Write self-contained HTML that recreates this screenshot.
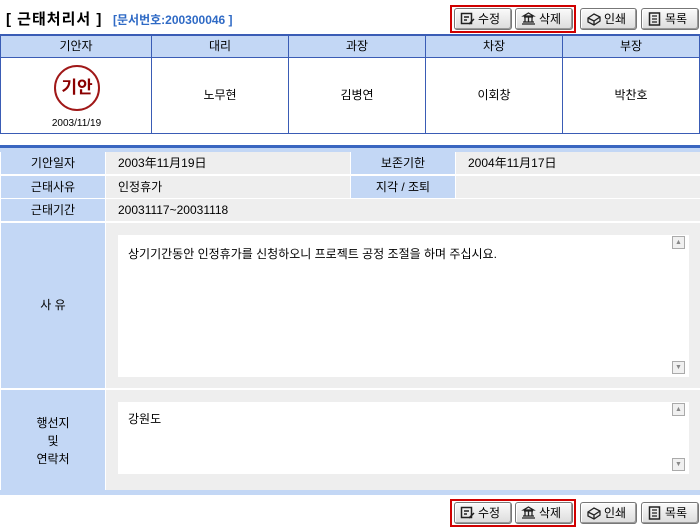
<html><head><style>
body{margin:0;width:700px;height:531px;background:#fff;font-family:"Liberation Sans","Noto Sans CJK KR","NanumGothic",sans-serif;font-size:12px;color:#000;position:relative;overflow:hidden}
div{position:absolute;box-sizing:border-box}
.lab{background:#c3d7f5;text-align:center}
.val{background:#eeeeee;padding-left:12px}
.btn{height:22px;top:8px;border:1px solid #777;border-radius:3px;background:linear-gradient(#fafafa,#dcdcdc);box-shadow:inset -1px -1px 0 #999,inset 1px 1px 0 #fff;font-size:12px;line-height:20px;padding-left:23px}
.btn svg{position:absolute;left:5px;top:3px}
.red{border:2px solid #d00000;height:28px;top:5px}
.ta{background:#fff}
.sb{width:13px;height:13px;border:1px solid #aaa;background:#f0f0f0;font-size:7px;line-height:11px;text-align:center;color:#888}
.hd{top:36px;height:21px;background:#c3d7f5;text-align:center;line-height:21px;border-right:1px solid #3a5cb5}
.bd{top:57px;height:76px;text-align:center;line-height:76px;border-right:1px solid #3a5cb5}
</style></head><body>
<div style="left:6px;top:8px;font-size:15px;font-weight:bold;letter-spacing:1px">[ 근태처리서 ]</div>
<div style="left:113px;top:11px;font-size:12px;font-weight:bold;color:#2f6ac5">[문서번호:200300046 ]</div>

<div class="red" style="left:450px;width:126px"></div>
<div class="btn" style="left:454px;width:58px"><svg width="15" height="14"><rect x="1.5" y="1.5" width="10" height="10" fill="none" stroke="#222" stroke-width="1.5"/><path d="M4 5h5M4 8h3M9 12l5-5" stroke="#222" stroke-width="1.5"/></svg>수정</div>
<div class="btn" style="left:515px;width:58px"><svg width="15" height="14"><path d="M1 12h13M2 10h11M3 5h9M7.5 1l5 3h-10z M4 5v5M7.5 5v5M11 5v5" stroke="#222" fill="none" stroke-width="1.3"/></svg>삭제</div>
<div class="btn" style="left:580px;width:57px"><svg width="15" height="14"><path d="M2 6l6-4 6 3v4l-6 4-6-3z M2 6l6 3 6-4 M8 9v4" stroke="#222" fill="none" stroke-width="1.3"/></svg>인쇄</div>
<div class="btn" style="left:641px;width:58px"><svg width="15" height="14"><rect x="2.5" y="1" width="10" height="12" fill="none" stroke="#222" stroke-width="1.5"/><path d="M5 4h5M5 7h5M5 10h5" stroke="#222" stroke-width="1.3"/></svg>목록</div>

<div style="left:0;top:34px;width:700px;height:100px;border:1px solid #3a5cb5;border-top:2px solid #3a5cb5"></div>
<div class="hd" style="left:1px;width:151px">기안자</div>
<div class="hd" style="left:152px;width:137px">대리</div>
<div class="hd" style="left:289px;width:137px">과장</div>
<div class="hd" style="left:426px;width:137px">차장</div>
<div class="hd" style="left:563px;width:136px;border-right:0">부장</div>
<div style="left:1px;top:57px;width:698px;height:1px;background:#3a5cb5"></div>
<div class="bd" style="left:1px;width:151px;line-height:normal">
 <div style="left:53px;top:8px;width:46px;height:46px;border:2px solid #a01818;border-radius:50%;color:#8b0000;font-weight:bold;font-size:17px;line-height:42px;text-align:center">기안</div>
 <div style="left:0;width:151px;top:61px;font-size:10px;text-align:center">2003/11/19</div>
</div>
<div class="bd" style="left:152px;width:137px">노무현</div>
<div class="bd" style="left:289px;width:137px">김병연</div>
<div class="bd" style="left:426px;width:137px">이회창</div>
<div class="bd" style="left:563px;width:136px;border-right:0">박찬호</div>

<div style="left:0;top:145px;width:700px;height:3px;background:#3a66c0"></div>
<div style="left:0;top:148px;width:700px;height:4px;background:#c3d7f5"></div>

<div class="lab" style="left:1px;top:152px;width:104px;height:22px;line-height:22px">기안일자</div>
<div class="val" style="left:106px;top:152px;width:244px;height:22px;line-height:22px">2003年11月19日</div>
<div class="lab" style="left:351px;top:152px;width:104px;height:22px;line-height:22px">보존기한</div>
<div class="val" style="left:456px;top:152px;width:244px;height:22px;line-height:22px">2004年11月17日</div>

<div class="lab" style="left:1px;top:176px;width:104px;height:22px;line-height:22px">근태사유</div>
<div class="val" style="left:106px;top:176px;width:244px;height:22px;line-height:22px">인정휴가</div>
<div class="lab" style="left:351px;top:176px;width:104px;height:22px;line-height:22px">지각 / 조퇴</div>
<div class="val" style="left:456px;top:176px;width:244px;height:22px"></div>

<div class="lab" style="left:1px;top:199px;width:104px;height:22px;line-height:22px">근태기간</div>
<div class="val" style="left:106px;top:199px;width:594px;height:22px;line-height:22px">20031117~20031118</div>

<div class="lab" style="left:1px;top:223px;width:104px;height:165px;line-height:165px">사 유</div>
<div class="val" style="left:106px;top:223px;width:594px;height:165px"></div>
<div class="ta" style="left:118px;top:235px;width:571px;height:142px;padding:10px 10px;font-size:12px">상기기간동안 인정휴가를 신청하오니 프로젝트 공정 조절을 하며 주십시요.</div>
<div class="sb" style="left:672px;top:236px">▲</div>
<div class="sb" style="left:672px;top:361px">▼</div>

<div class="lab" style="left:1px;top:390px;width:104px;height:100px;padding-top:24px;line-height:18px">행선지<br>및<br>연락처</div>
<div class="val" style="left:106px;top:390px;width:594px;height:100px"></div>
<div class="ta" style="left:118px;top:402px;width:571px;height:72px;padding:8px 10px">강원도</div>
<div class="sb" style="left:672px;top:403px">▲</div>
<div class="sb" style="left:672px;top:458px">▼</div>

<div style="left:0;top:490px;width:700px;height:5px;background:#c3d7f5"></div>

<div class="red" style="left:450px;top:499px;width:126px"></div>
<div class="btn" style="left:454px;top:502px;width:58px"><svg width="15" height="14"><rect x="1.5" y="1.5" width="10" height="10" fill="none" stroke="#222" stroke-width="1.5"/><path d="M4 5h5M4 8h3M9 12l5-5" stroke="#222" stroke-width="1.5"/></svg>수정</div>
<div class="btn" style="left:515px;top:502px;width:58px"><svg width="15" height="14"><path d="M1 12h13M2 10h11M3 5h9M7.5 1l5 3h-10z M4 5v5M7.5 5v5M11 5v5" stroke="#222" fill="none" stroke-width="1.3"/></svg>삭제</div>
<div class="btn" style="left:580px;top:502px;width:57px"><svg width="15" height="14"><path d="M2 6l6-4 6 3v4l-6 4-6-3z M2 6l6 3 6-4 M8 9v4" stroke="#222" fill="none" stroke-width="1.3"/></svg>인쇄</div>
<div class="btn" style="left:641px;top:502px;width:58px"><svg width="15" height="14"><rect x="2.5" y="1" width="10" height="12" fill="none" stroke="#222" stroke-width="1.5"/><path d="M5 4h5M5 7h5M5 10h5" stroke="#222" stroke-width="1.3"/></svg>목록</div>
</body></html>
